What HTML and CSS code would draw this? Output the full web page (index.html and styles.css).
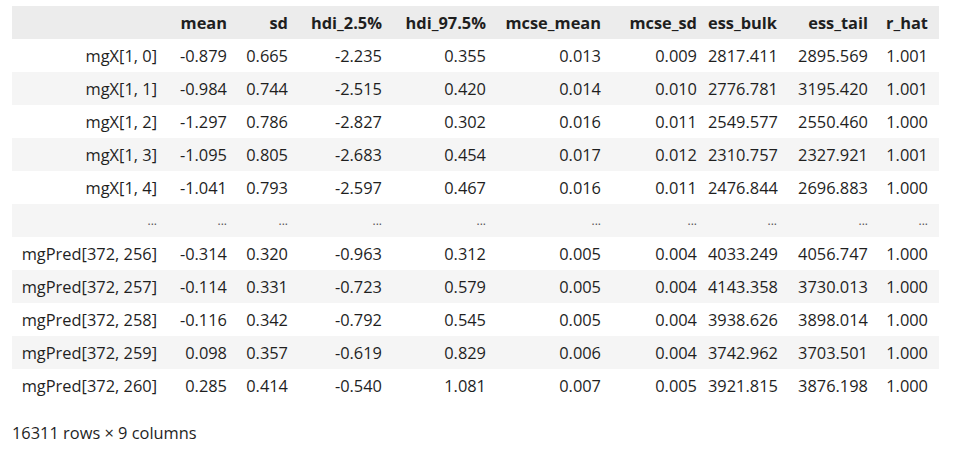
FILE: index.html
```html
<!DOCTYPE html>
<html>
<head>
<meta charset="utf-8">
<link rel="stylesheet" href="styles.css">
</head>
<body>
<div class="output">
<table class="dataframe">
<colgroup>
<col class="c-idx"><col class="c-mean"><col class="c-sd"><col class="c-h25"><col class="c-h975"><col class="c-mm"><col class="c-ms"><col class="c-eb"><col class="c-et"><col class="c-rh">
</colgroup>
<thead>
<tr><th></th><th>mean</th><th>sd</th><th>hdi_2.5%</th><th>hdi_97.5%</th><th>mcse_mean</th><th>mcse_sd</th><th>ess_bulk</th><th>ess_tail</th><th>r_hat</th></tr>
</thead>
<tbody>
<tr><th>mgX[1, 0]</th><td>-0.879</td><td>0.665</td><td>-2.235</td><td>0.355</td><td>0.013</td><td>0.009</td><td>2817.411</td><td>2895.569</td><td>1.001</td></tr>
<tr><th>mgX[1, 1]</th><td>-0.984</td><td>0.744</td><td>-2.515</td><td>0.420</td><td>0.014</td><td>0.010</td><td>2776.781</td><td>3195.420</td><td>1.001</td></tr>
<tr><th>mgX[1, 2]</th><td>-1.297</td><td>0.786</td><td>-2.827</td><td>0.302</td><td>0.016</td><td>0.011</td><td>2549.577</td><td>2550.460</td><td>1.000</td></tr>
<tr><th>mgX[1, 3]</th><td>-1.095</td><td>0.805</td><td>-2.683</td><td>0.454</td><td>0.017</td><td>0.012</td><td>2310.757</td><td>2327.921</td><td>1.001</td></tr>
<tr><th>mgX[1, 4]</th><td>-1.041</td><td>0.793</td><td>-2.597</td><td>0.467</td><td>0.016</td><td>0.011</td><td>2476.844</td><td>2696.883</td><td>1.000</td></tr>
<tr class="ellipsis"><th>...</th><td>...</td><td>...</td><td>...</td><td>...</td><td>...</td><td>...</td><td>...</td><td>...</td><td>...</td></tr>
<tr><th>mgPred[372, 256]</th><td>-0.314</td><td>0.320</td><td>-0.963</td><td>0.312</td><td>0.005</td><td>0.004</td><td>4033.249</td><td>4056.747</td><td>1.000</td></tr>
<tr><th>mgPred[372, 257]</th><td>-0.114</td><td>0.331</td><td>-0.723</td><td>0.579</td><td>0.005</td><td>0.004</td><td>4143.358</td><td>3730.013</td><td>1.000</td></tr>
<tr><th>mgPred[372, 258]</th><td>-0.116</td><td>0.342</td><td>-0.792</td><td>0.545</td><td>0.005</td><td>0.004</td><td>3938.626</td><td>3898.014</td><td>1.000</td></tr>
<tr><th>mgPred[372, 259]</th><td>0.098</td><td>0.357</td><td>-0.619</td><td>0.829</td><td>0.006</td><td>0.004</td><td>3742.962</td><td>3703.501</td><td>1.000</td></tr>
<tr><th>mgPred[372, 260]</th><td>0.285</td><td>0.414</td><td>-0.540</td><td>1.081</td><td>0.007</td><td>0.005</td><td>3921.815</td><td>3876.198</td><td>1.000</td></tr>
</tbody>
</table>
<p class="shape">16311 rows × 9 columns</p>
</div>
</body>
</html>
```

FILE: styles.css
```css
html, body {
  margin: 0;
  padding: 0;
  background: #ffffff;
}

.output {
  padding: 6px 12px 0 12px;
  font-family: "Open Sans", "Noto Sans", sans-serif;
  font-size: 16.4px;
  color: #1f1f1f;
}

.dataframe {
  border-collapse: collapse;
  table-layout: fixed;
  width: 927px;
}

.c-idx { width: 156px; }
.c-mean { width: 70px; }
.c-sd { width: 61px; }
.c-h25 { width: 94px; }
.c-h975 { width: 104px; }
.c-mm { width: 115px; }
.c-ms { width: 96px; }
.c-eb { width: 80px; }
.c-et { width: 91px; }
.c-rh { width: 60px; }

.dataframe th,
.dataframe td {
  height: 33px;
  padding: 0 11px 0 0;
  text-align: right;
  white-space: nowrap;
  box-sizing: border-box;
  line-height: 20px;
  vertical-align: middle;
}

.dataframe thead th {
  font-weight: 700;
  background: #ececec;
}

.dataframe tbody th {
  font-weight: 400;
}

.dataframe tbody tr:nth-child(even) {
  background: #f5f5f5;
}

.dataframe tr.ellipsis th,
.dataframe tr.ellipsis td {
  color: #555555;
  font-size: 12px;
}

.shape {
  margin: 20px 0 0 0;
  line-height: 22px;
}
```
